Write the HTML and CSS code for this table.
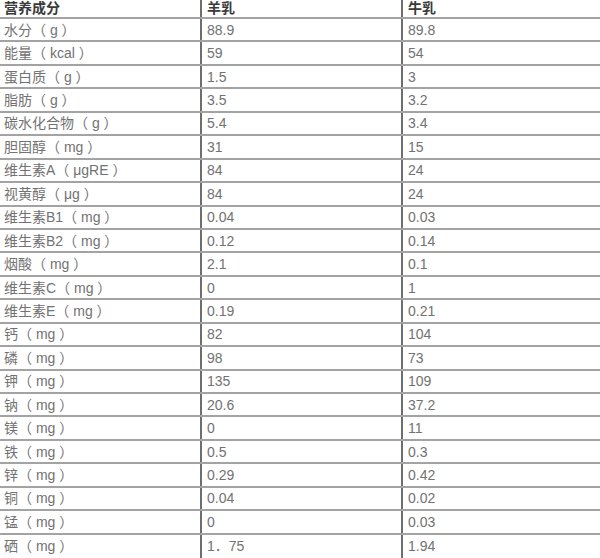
FILE: index.html
```html
<!DOCTYPE html>
<html lang="zh">
<head>
<meta charset="utf-8">
<link rel="stylesheet" href="styles.css">
</head>
<body>
<div class="table">
  <div class="row head"><div class="c c1">营养成分</div><div class="c c2">羊乳</div><div class="c c3">牛乳</div></div>
  <div class="row"><div class="c c1">水分（ g ）</div><div class="c c2">88.9</div><div class="c c3">89.8</div></div>
  <div class="row"><div class="c c1">能量（ kcal ）</div><div class="c c2">59</div><div class="c c3">54</div></div>
  <div class="row"><div class="c c1">蛋白质（ g ）</div><div class="c c2">1.5</div><div class="c c3">3</div></div>
  <div class="row"><div class="c c1">脂肪（ g ）</div><div class="c c2">3.5</div><div class="c c3">3.2</div></div>
  <div class="row"><div class="c c1">碳水化合物（ g ）</div><div class="c c2">5.4</div><div class="c c3">3.4</div></div>
  <div class="row"><div class="c c1">胆固醇（ mg ）</div><div class="c c2">31</div><div class="c c3">15</div></div>
  <div class="row"><div class="c c1">维生素A（ μgRE ）</div><div class="c c2">84</div><div class="c c3">24</div></div>
  <div class="row"><div class="c c1">视黄醇（ μg ）</div><div class="c c2">84</div><div class="c c3">24</div></div>
  <div class="row"><div class="c c1">维生素B1（ mg ）</div><div class="c c2">0.04</div><div class="c c3">0.03</div></div>
  <div class="row"><div class="c c1">维生素B2（ mg ）</div><div class="c c2">0.12</div><div class="c c3">0.14</div></div>
  <div class="row"><div class="c c1">烟酸（ mg ）</div><div class="c c2">2.1</div><div class="c c3">0.1</div></div>
  <div class="row"><div class="c c1">维生素C（ mg ）</div><div class="c c2">0</div><div class="c c3">1</div></div>
  <div class="row"><div class="c c1">维生素E（ mg ）</div><div class="c c2">0.19</div><div class="c c3">0.21</div></div>
  <div class="row"><div class="c c1">钙（ mg ）</div><div class="c c2">82</div><div class="c c3">104</div></div>
  <div class="row"><div class="c c1">磷（ mg ）</div><div class="c c2">98</div><div class="c c3">73</div></div>
  <div class="row"><div class="c c1">钾（ mg ）</div><div class="c c2">135</div><div class="c c3">109</div></div>
  <div class="row"><div class="c c1">钠（ mg ）</div><div class="c c2">20.6</div><div class="c c3">37.2</div></div>
  <div class="row"><div class="c c1">镁（ mg ）</div><div class="c c2">0</div><div class="c c3">11</div></div>
  <div class="row"><div class="c c1">铁（ mg ）</div><div class="c c2">0.5</div><div class="c c3">0.3</div></div>
  <div class="row"><div class="c c1">锌（ mg ）</div><div class="c c2">0.29</div><div class="c c3">0.42</div></div>
  <div class="row"><div class="c c1">铜（ mg ）</div><div class="c c2">0.04</div><div class="c c3">0.02</div></div>
  <div class="row"><div class="c c1">锰（ mg ）</div><div class="c c2">0</div><div class="c c3">0.03</div></div>
  <div class="row last"><div class="c c1">硒（ mg ）</div><div class="c c2">1．75</div><div class="c c3">1.94</div></div>
</div>
</body>
</html>
```
FILE: styles.css
```css
html, body {
  margin: 0;
  padding: 0;
  background: #ffffff;
}
body {
  width: 600px;
  height: 558px;
  overflow: hidden;
  font-family: "Liberation Sans", "Noto Sans CJK SC", sans-serif;
  font-size: 14px;
  color: #727272;
}
.table {
  display: grid;
  grid-template-rows: 19px repeat(23, 23.45px);
}
.row {
  display: grid;
  grid-template-columns: 200px 201px 199px;
  border-bottom: 2px solid #a3a3a3;
  box-sizing: border-box;
}
.row.last {
  border-bottom: none;
}
.c {
  display: flex;
  align-items: center;
  padding-left: 4px;
  white-space: pre;
  line-height: 1;
}
.c2, .c3 {
  border-left: 2px solid #6e6e6e;
  padding-left: 5px;
}
.head .c {
  font-weight: bold;
  color: #3a3a3a;
  align-items: flex-end;
  padding-bottom: 2px;
}
```
